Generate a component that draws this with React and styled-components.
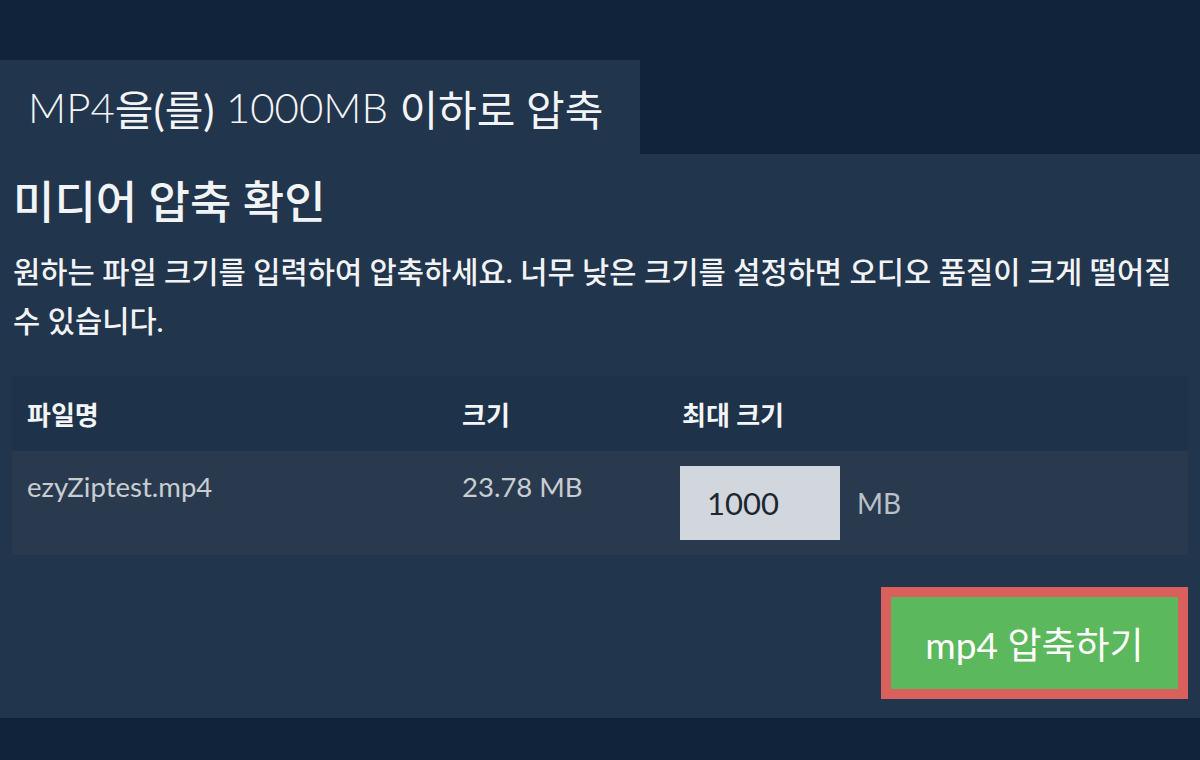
import React from 'react'
import styled, { createGlobalStyle } from 'styled-components'

const GlobalStyle = createGlobalStyle`
  html, body {
    margin: 0;
    padding: 0;
    background: #10233a;
  }
  body {
    font-family: Lato, "Noto Sans CJK KR", sans-serif;
    color: #f1f3f5;
  }
`

const Page = styled.div`
  height: 760px;
  padding-top: 60px;
  box-sizing: border-box;
  overflow: hidden;
`

const TabBar = styled.div`
  display: flex;
`

const Tab = styled.div`
  width: 640px;
  height: 94px;
  box-sizing: border-box;
  padding-left: 28px;
  display: flex;
  align-items: center;
  background: #21354c;
  font-size: 42px;
  font-weight: 300;
  color: #f3f4f6;
  white-space: nowrap;
`

const Hangul = styled.span`
  font-weight: 400;
`

const Panel = styled.section`
  background: #21354c;
  padding: 18px 12px 19px 13px;
`

const Title = styled.h2`
  margin: 0 0 15px;
  font-size: 45px;
  font-weight: 500;
  line-height: 60px;
  color: #f1f3f5;
`

const Description = styled.p`
  margin: 0 0 31px;
  font-size: 29.6px;
  font-weight: 500;
  line-height: 49px;
  color: #f1f3f5;
  word-break: keep-all;
`

const Table = styled.div`
  margin-left: -1px;
  display: grid;
  grid-template-columns: 435px 220px 1fr;
`

const HeadCell = styled.div`
  height: 75px;
  padding: 0 15px;
  display: flex;
  align-items: center;
  background: #1e3349;
  font-size: 26px;
  font-weight: 700;
  color: #f4f5f7;
`

const Cell = styled.div`
  height: 104px;
  box-sizing: border-box;
  padding: ${({ $field }) => ($field ? '15px' : '22px 15px')};
  display: flex;
  align-items: flex-start;
  gap: 17px;
  background: #2a3a4e;
  font-size: 27.5px;
  line-height: 28px;
  color: #c8cdd3;
`

const SizeInput = styled.input`
  width: 160px;
  height: 74px;
  box-sizing: border-box;
  margin-left: -2px;
  padding: 0 27px;
  border: none;
  outline: none;
  background: #d1d7dc;
  font-family: Lato, sans-serif;
  font-size: 31px;
  color: #1d2731;
`

const Unit = styled.span`
  align-self: center;
  font-size: 28px;
  color: #b9c1c9;
`

const Actions = styled.div`
  display: flex;
  justify-content: flex-end;
  margin-top: 32px;
`

const CompressButton = styled.button`
  width: 307px;
  height: 112px;
  box-sizing: border-box;
  border: 10px solid #da605c;
  background: #5cb85c;
  color: #ffffff;
  font-family: Lato, "Noto Sans CJK KR", sans-serif;
  font-size: 37px;
  font-weight: 400;
  cursor: pointer;
`

export default function App() {
  return (
    <Page>
      <GlobalStyle />
      <TabBar>
        <Tab>
          MP4<Hangul>을(를)</Hangul>&nbsp;1000MB&nbsp;<Hangul>이하로 압축</Hangul>
        </Tab>
      </TabBar>
      <Panel>
        <Title>미디어 압축 확인</Title>
        <Description>
          원하는 파일 크기를 입력하여 압축하세요. 너무 낮은 크기를 설정하면 오디오 품질이 크게 떨어질 수 있습니다.
        </Description>
        <Table>
          <HeadCell>파일명</HeadCell>
          <HeadCell>크기</HeadCell>
          <HeadCell>최대 크기</HeadCell>
          <Cell>ezyZiptest.mp4</Cell>
          <Cell>23.78 MB</Cell>
          <Cell $field>
            <SizeInput type="text" defaultValue="1000" />
            <Unit>MB</Unit>
          </Cell>
        </Table>
        <Actions>
          <CompressButton>mp4 압축하기</CompressButton>
        </Actions>
      </Panel>
    </Page>
  )
}
